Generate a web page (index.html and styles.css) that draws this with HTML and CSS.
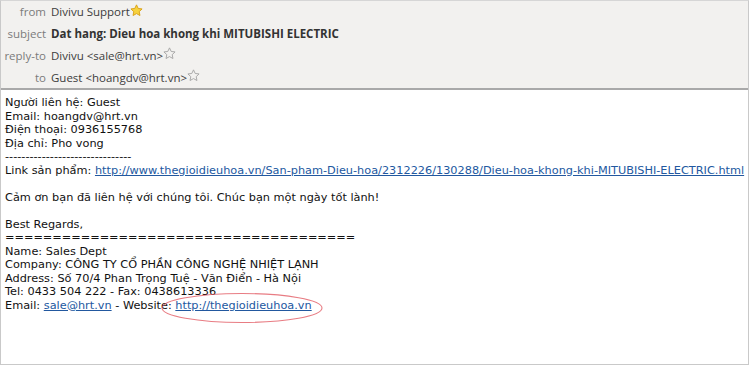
FILE: index.html
```html
<!DOCTYPE html>
<html>
<head>
<meta charset="utf-8">
<link rel="stylesheet" href="styles.css">
</head>
<body>
<div class="msg">
  <div class="hdr">
    <div class="row"><span class="lbl">from</span><span class="val">Divivu Support<svg class="star" viewBox="0 0 12 12"><path d="M6 .8l1.55 3.3 3.6.45-2.65 2.5.68 3.57L6 8.850 2.82 10.62l.68-3.57L.85 4.55l3.6-.45z" fill="#f7d23e" stroke="#d9a21b" stroke-width=".9" stroke-linejoin="round"/></svg></span></div>
    <div class="row"><span class="lbl">subject</span><span class="val bold">Dat hang: Dieu hoa khong khi MITUBISHI ELECTRIC</span></div>
    <div class="row"><span class="lbl">reply-to</span><span class="val">Divivu &lt;sale@hrt.vn&gt;<svg class="star" viewBox="0 0 12 12"><path d="M6 .8l1.55 3.3 3.6.45-2.65 2.5.68 3.57L6 8.85 2.82 10.62l.68-3.57L.85 4.55l3.6-.45z" fill="none" stroke="#a8a8a8" stroke-width=".9" stroke-linejoin="round"/></svg></span></div>
    <div class="row"><span class="lbl">to</span><span class="val">Guest &lt;hoangdv@hrt.vn&gt;<svg class="star" viewBox="0 0 12 12"><path d="M6 .8l1.55 3.3 3.6.45-2.65 2.5.68 3.57L6 8.85 2.82 10.62l.68-3.57L.85 4.55l3.6-.45z" fill="none" stroke="#a8a8a8" stroke-width=".9" stroke-linejoin="round"/></svg></span></div>
  </div>
  <div class="body">
    <div class="ln">Người liên hệ: Guest</div>
    <div class="ln">Email: hoangdv@hrt.vn</div>
    <div class="ln">Điện thoại: 0936155768</div>
    <div class="ln">Địa chỉ: Pho vong</div>
    <div class="ln">-------------------------------</div>
    <div class="ln">Link sản phẩm: <a href="#">http://www.thegioidieuhoa.vn/San-pham-Dieu-hoa/2312226/130288/Dieu-hoa-khong-khi-MITUBISHI-ELECTRIC.html</a></div>
    <div class="ln">&nbsp;</div>
    <div class="ln">Cảm ơn bạn đã liên hệ với chúng tôi. Chúc bạn một ngày tốt lành!</div>
    <div class="ln">&nbsp;</div>
    <div class="ln">Best Regards,</div>
    <div class="ln">=====================================</div>
    <div class="ln">Name: Sales Dept</div>
    <div class="ln">Company: CÔNG TY CỔ PHẦN CÔNG NGHỆ NHIỆT LẠNH</div>
    <div class="ln">Address: Số 70/4 Phan Trọng Tuệ - Văn Điển - Hà Nội</div>
    <div class="ln">Tel: 0433 504 222 - Fax: 0438613336</div>
    <div class="ln">Email: <a href="#">sale@hrt.vn</a> - Website: <a href="#">http://thegioidieuhoa.vn</a></div>
    <svg class="ring" viewBox="0 0 164 32"><ellipse cx="82" cy="16" rx="80" ry="14.5" fill="none" stroke="#e0505a" stroke-opacity=".75" stroke-width="1.1"/></svg>
  </div>
</div>
</body>
</html>
```
FILE: styles.css
```css
html, body { margin: 0; padding: 0; background: #fff; }
.msg {
  width: 749px;
  height: 365px;
  border: 1px solid #c9c9c9;
  border-top-color: #d6d6d6;
  box-sizing: border-box;
  display: flex;
  flex-direction: column;
}
.hdr {
  background: #f2f1ef;
  border-bottom: 2px solid #a9a9a9;
  height: 89px;
  box-sizing: border-box;
  display: flex;
  flex-direction: column;
  font-family: "Open Sans", "Noto Sans", sans-serif;
  font-size: 11.5px;
  color: #3c3c3c;
}
.row {
  height: 22px;
  display: flex;
  align-items: center;
}
.lbl {
  width: 45px;
  text-align: right;
  color: #7b7b7b;
  margin-right: 5px;
}
.val { display: flex; align-items: center; }
.bold { font-weight: 700; color: #333; }
.star { width: 13px; height: 13px; margin-top: -3px; }
.body {
  position: relative;
  flex: 1;
  padding: 6px 0 0 4px;
  font-family: "DejaVu Sans", sans-serif;
  font-size: 11.3px;
  line-height: 13.5px;
  color: #111;
}
.ln { white-space: pre; }
a { color: #22589f; text-decoration: underline; }
.ring {
  position: absolute;
  left: 159px;
  top: 202px;
  width: 164px;
  height: 32px;
}
```
